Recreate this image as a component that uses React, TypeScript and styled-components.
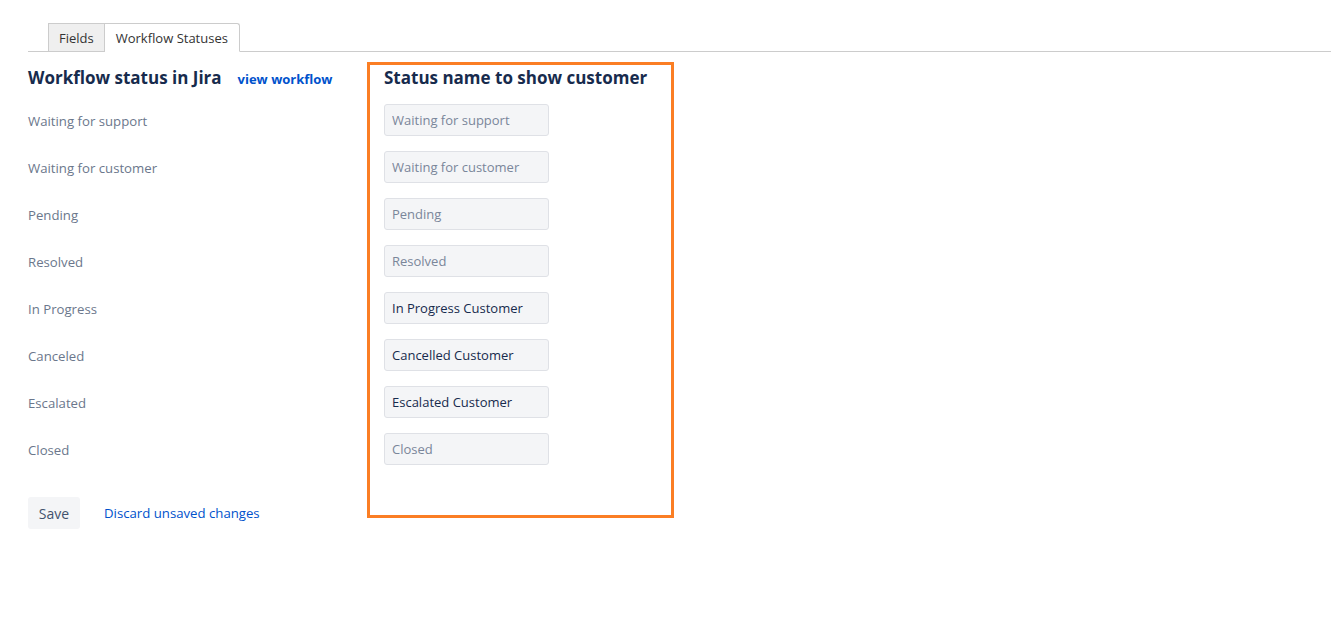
import React from 'react';
import styled, { createGlobalStyle } from 'styled-components';

const GlobalStyle = createGlobalStyle`
  body {
    margin: 0;
    background: #fff;
    font-family: "Open Sans", "Liberation Sans", sans-serif;
    color: #172b4d;
  }
`;

const Page = styled.div`
  padding: 23px 10px 0 28px;
`;

const TabBar = styled.div`
  display: flex;
  padding-left: 20px;
  border-bottom: 1px solid #cccccc;
  height: 28px;
`;

const Tab = styled.div<{ $active?: boolean }>`
  display: flex;
  align-items: center;
  padding: 0 ${(p) => (p.$active ? '11px' : '10px')};
  font-size: 13px;
  color: #333;
  background: ${(p) => (p.$active ? '#ffffff' : '#efefef')};
  border: 1px solid #cccccc;
  border-bottom: ${(p) => (p.$active ? '1px solid #fff' : '1px solid #ccc')};
  border-left: ${(p) => (p.$active ? 'none' : '1px solid #ccc')};
  border-radius: ${(p) => (p.$active ? '0 3px 0 0' : '0')};
  margin-bottom: -1px;
`;

const Main = styled.div`
  display: flex;
  align-items: flex-start;
  margin-top: 10px;
`;

const LeftColumn = styled.div`
  width: 339px;
  padding-top: 4px;
`;

const HighlightBox = styled.div`
  width: 307px;
  height: 456px;
  border: 3px solid #fb7e24;
  padding: 1px 0 0 14px;
  box-sizing: border-box;
`;

const HeadingRow = styled.div`
  display: flex;
  align-items: baseline;
  gap: 16px;
  height: 24px;
`;

const Heading = styled.h2`
  margin: 0;
  font-size: 17px;
  line-height: 24px;
  font-weight: 700;
  color: #172b4d;
  white-space: nowrap;
`;

const HeadLink = styled.a`
  font-size: 13px;
  font-weight: 700;
  color: #0052cc;
  text-decoration: none;
`;

const Rows = styled.div`
  display: flex;
  flex-direction: column;
  gap: 15px;
  margin-top: 14px;
`;

const Label = styled.div`
  height: 32px;
  display: flex;
  align-items: center;
  padding-top: 2px;
  box-sizing: border-box;
  font-size: 13.2px;
  color: #6b778c;
`;

const Field = styled.input`
  width: 165px;
  height: 32px;
  box-sizing: border-box;
  padding: 0 7px;
  border: 1px solid #dfe1e6;
  border-radius: 3px;
  background: #f4f5f7;
  font-family: inherit;
  font-size: 13px;
  color: #172b4d;
  outline: none;
  &::placeholder {
    color: #7a869a;
  }
`;

const Actions = styled.div`
  display: flex;
  align-items: center;
  gap: 24px;
  margin-top: 32px;
`;

const SaveButton = styled.button`
  width: 52px;
  height: 32px;
  border: none;
  border-radius: 3px;
  background: #f4f5f7;
  font-family: inherit;
  font-size: 14px;
  color: #42526e;
`;

const TextLink = styled.a`
  font-size: 13.2px;
  color: #0052cc;
  text-decoration: none;
`;

const statuses: { jira: string; customer: string; filled: boolean }[] = [
  { jira: 'Waiting for support', customer: 'Waiting for support', filled: false },
  { jira: 'Waiting for customer', customer: 'Waiting for customer', filled: false },
  { jira: 'Pending', customer: 'Pending', filled: false },
  { jira: 'Resolved', customer: 'Resolved', filled: false },
  { jira: 'In Progress', customer: 'In Progress Customer', filled: true },
  { jira: 'Canceled', customer: 'Cancelled Customer', filled: true },
  { jira: 'Escalated', customer: 'Escalated Customer', filled: true },
  { jira: 'Closed', customer: 'Closed', filled: false },
];

export default function App() {
  return (
    <>
      <GlobalStyle />
      <Page>
        <TabBar>
          <Tab>Fields</Tab>
          <Tab $active>Workflow Statuses</Tab>
        </TabBar>
        <Main>
          <LeftColumn>
            <HeadingRow>
              <Heading>Workflow status in Jira</Heading>
              <HeadLink href="#">view workflow</HeadLink>
            </HeadingRow>
            <Rows>
              {statuses.map((s) => (
                <Label key={s.jira}>{s.jira}</Label>
              ))}
            </Rows>
            <Actions>
              <SaveButton>Save</SaveButton>
              <TextLink href="#">Discard unsaved changes</TextLink>
            </Actions>
          </LeftColumn>
          <HighlightBox>
            <Heading>Status name to show customer</Heading>
            <Rows>
              {statuses.map((s) =>
                s.filled ? (
                  <Field key={s.jira} defaultValue={s.customer} />
                ) : (
                  <Field key={s.jira} placeholder={s.customer} />
                )
              )}
            </Rows>
          </HighlightBox>
        </Main>
      </Page>
    </>
  );
}
